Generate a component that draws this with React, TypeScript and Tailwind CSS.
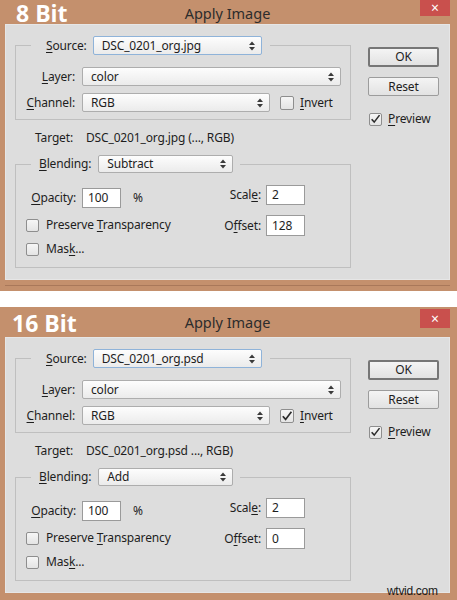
import React from "react";

const ui = "font-['Noto_Sans',sans-serif] text-[12px] leading-[16px] tracking-[-0.15px] text-[#1e1e1e]";

const Arrows = () => (
  <svg width="6" height="10" viewBox="0 0 6 10" className="shrink-0">
    <path d="M0 4 L3 0.5 L6 4 Z" fill="#3a3a3a" />
    <path d="M0 6 L3 9.5 L6 6 Z" fill="#3a3a3a" />
  </svg>
);

const Select = ({
  value,
  width,
  height = 19,
  focused = false,
}: {
  value: string;
  width: number;
  height?: number;
  focused?: boolean;
}) => (
  <div
    className={`flex items-center justify-between rounded-[2px] border bg-gradient-to-b from-[#fdfdfd] to-[#ebebeb] pl-[8px] pr-[6px] ${
      focused ? "border-[#8fb3d9]" : "border-[#adadad]"
    }`}
    style={{ width, height }}>
    <span>{value}</span>
    <Arrows />
  </div>
);

const Check = ({ checked = false, size = 14 }: { checked?: boolean; size?: number }) => (
  <div
    className="flex shrink-0 items-center justify-center rounded-[2px] border border-[#8e8e8e] bg-gradient-to-b from-[#f6f6f6] to-[#e4e4e4]"
    style={{ width: size, height: size }}>
    {checked && (
      <svg width="12" height="12" viewBox="0 0 12 12">
        <path d="M1.8 6.2 L4.6 9.4 L10.4 1.8" fill="none" stroke="#2b2b2b" strokeWidth="1.7" />
      </svg>
    )}
  </div>
);

const Field = ({ value, h = 20 }: { value: string; h?: number }) => (
  <div
    className="flex w-[39px] items-center border border-[#9a9a9a] bg-white pl-[5px]"
    style={{ height: h }}>
    {value}
  </div>
);

const Key = ({ children }: { children: React.ReactNode }) => <u className="underline-offset-2">{children}</u>;

type DialogProps = {
  bit: string;
  bitCls: string;
  barH: string;
  closeCls: string;
  source: string;
  invert: boolean;
  target: string;
  blending: string;
  offset: string;
  bottom: React.ReactNode;
};

const Dialog = (p: DialogProps) => (
  <div className={`bg-[#c4906d] pl-[5px] pr-[7px] ${ui}`}>
    {/* title bar */}
    <div className={`grid grid-cols-[1fr_auto_1fr] ${p.barH}`}>
      <span
        className={`justify-self-start font-['Open_Sans',sans-serif] text-[23px] leading-[24px] font-bold tracking-normal text-white ${p.bitCls}`}>
        {p.bit}
      </span>
      <span className="self-center text-[14.5px] leading-[18px] tracking-normal text-[#2c2c2c]">Apply Image</span>
      <div
        className={`flex w-[30px] items-center justify-center justify-self-end self-start bg-[#c9504d] text-[14px] leading-[16px] text-white ${p.closeCls}`}>
        ×
      </div>
    </div>

    {/* body */}
    <div className="flex border border-[#e6e6e6] bg-[#dddddd] pl-[9px] pt-[11px] pb-[11px]">
      <div className="flex w-[336px] flex-col">
        <fieldset className="border border-[#bfbfbf] pb-[7px]">
          <legend className="ml-[15px] flex items-center pl-[15px] pr-[8px]">
            <span>
              <Key>S</Key>ource:
            </span>
            <div className="ml-[6px]">
              <Select value={p.source} width={169} height={19} focused />
            </div>
          </legend>
          <div className="mt-[12px] flex items-center">
            <span className="w-[59px] text-right">
              <Key>L</Key>ayer:
            </span>
            <div className="ml-[7px]">
              <Select value="color" width={259} />
            </div>
          </div>
          <div className="mt-[7px] flex items-center">
            <span className="w-[59px] text-right">
              <Key>C</Key>hannel:
            </span>
            <div className="ml-[7px]">
              <Select value="RGB" width={188} />
            </div>
            <div className="ml-[10px]">
              <Check checked={p.invert} />
            </div>
            <span className="ml-[6px]">
              <Key>I</Key>nvert
            </span>
          </div>
        </fieldset>

        <div className="mt-[10px] flex">
          <span className="w-[58px] text-right">Target:</span>
          <span className="ml-[13px]">{p.target}</span>
        </div>

        <fieldset className="mt-[9px] border border-[#bfbfbf] pb-[10px]">
          <legend className="ml-[15px] flex items-center pl-[8px] pr-[7px]">
            <span>
              <Key>B</Key>lending:
            </span>
            <div className="ml-[7px]">
              <Select value={p.blending} width={135} height={18} />
            </div>
          </legend>
          <div className="flex items-start">
            <div className="mt-[15px] flex flex-col">
              <div className="flex items-center">
                <span className="w-[60px] text-right">
                  <Key>O</Key>pacity:
                </span>
                <div className="ml-[6px]">
                  <Field value="100" />
                </div>
                <span className="ml-[12px]">%</span>
              </div>
              <div className="mt-[9px] flex items-center pl-[10px]">
                <Check size={13} />
                <span className="ml-[7px]">
                  Preserve <Key>T</Key>ransparency
                </span>
              </div>
              <div className="mt-[8px] flex items-center pl-[10px]">
                <Check size={13} />
                <span className="ml-[7px]">
                  Mas<Key>k</Key>...
                </span>
              </div>
            </div>
            <div className="mt-[12px] mr-[45px] ml-auto flex flex-col items-end">
              <div className="flex items-center">
                <span>
                  Scal<Key>e</Key>:
                </span>
                <div className="ml-[5px]">
                  <Field value="2" />
                </div>
              </div>
              <div className="mt-[10px] flex items-center">
                <span>
                  O<Key>f</Key>fset:
                </span>
                <div className="ml-[5px]">
                  <Field value={p.offset} h={21} />
                </div>
              </div>
            </div>
          </div>
        </fieldset>
      </div>

      {/* buttons */}
      <div className="ml-[17px] flex w-[71px] flex-col pt-[11px]">
        <div className="flex h-[20px] items-center justify-center rounded-[2px] border-2 border-[#767676] bg-gradient-to-b from-[#f4f4f4] to-[#e2e2e2]">
          OK
        </div>
        <div className="mt-[10px] flex h-[19px] items-center justify-center rounded-[2px] border border-[#9c9c9c] bg-gradient-to-b from-[#f4f4f4] to-[#e2e2e2]">
          Reset
        </div>
        <div className="mt-[15px] flex items-center pl-[1px]">
          <Check checked size={13} />
          <span className="ml-[6px]">
            <Key>P</Key>review
          </span>
        </div>
      </div>
    </div>
    {p.bottom}
  </div>
);

export default function App() {
  return (
    <div className="relative h-[600px] w-[457px] overflow-hidden bg-white">
      <Dialog
        bit="8 Bit"
        bitCls="ml-[11px] mt-[1px]"
        barH="h-[24px]"
        closeCls="h-[16px]"
        source="DSC_0201_org.jpg"
        invert={false}
        target="DSC_0201_org.jpg (..., RGB)"
        blending="Subtract"
        offset="128"
        bottom={
          <div className="pb-[5px] pt-[5px]">
            <div className="h-[1px] bg-[#a9785a]" />
          </div>
        }
      />
      <div className="h-[16px]" />
      <Dialog
        bit="16 Bit"
        bitCls="ml-[7px] mt-[4px]"
        barH="h-[30px]"
        closeCls="mt-[2px] h-[19px]"
        source="DSC_0201_org.psd"
        invert
        target="DSC_0201_org.psd ..., RGB)"
        blending="Add"
        offset="0"
        bottom={<div className="h-[10px]" />}
      />
      <span className="absolute top-[582px] left-[387px] font-['Liberation_Sans',sans-serif] text-[12px] tracking-[-0.3px] text-[#1a1a1a]">
        wtvid.com
      </span>
    </div>
  );
}
